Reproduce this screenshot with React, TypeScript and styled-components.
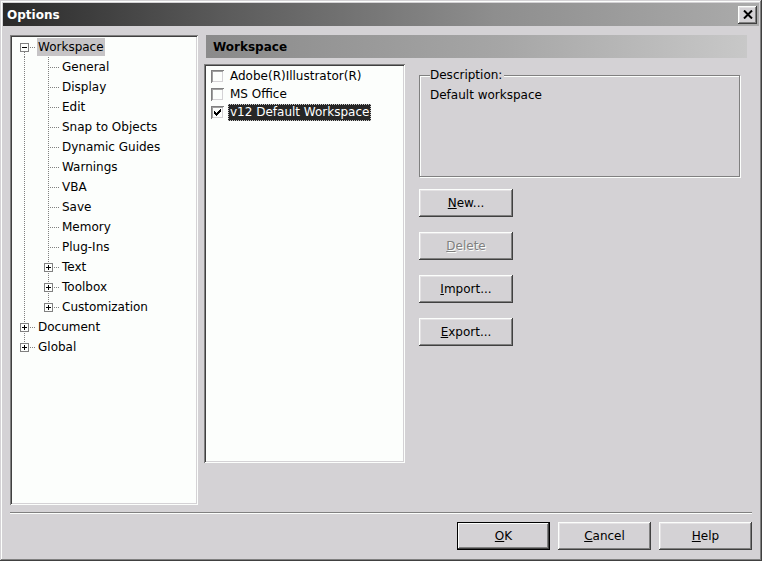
import React from 'react';
import styled, { createGlobalStyle } from 'styled-components';

const FACE = '#d4d2d5';
const WHITE = '#fcfefc';

const GlobalStyle = createGlobalStyle`
  html, body {
    margin: 0;
    padding: 0;
    background: ${FACE};
  }
  body {
    font-family: 'DejaVu Sans', 'Liberation Sans', sans-serif;
    font-size: 12px;
    color: #000;
  }
  * { box-sizing: border-box; }
`;

const Window = styled.div`
  width: 762px;
  height: 561px;
  padding: 3px;
  display: flex;
  flex-direction: column;
  background: ${FACE};
  box-shadow: inset -1px -1px #404040, inset 1px 1px ${FACE},
    inset -2px -2px #808080, inset 2px 2px ${WHITE};
`;

const TitleBar = styled.div`
  flex: none;
  height: 23px;
  display: flex;
  align-items: center;
  padding: 0 2px 0 4px;
  background: linear-gradient(to right, #2a2a2a 0%, #5c5c5c 30%, #8e8e8e 65%, #ababab 100%);
  color: #fff;
  font-weight: bold;
  font-size: 12px;
`;

const CloseButton = styled.button`
  margin-left: auto;
  width: 19px;
  height: 18px;
  padding: 0;
  border: none;
  display: flex;
  align-items: center;
  justify-content: center;
  background: ${FACE};
  box-shadow: inset -1px -1px #404040, inset 1px 1px ${WHITE},
    inset -2px -2px #808080, inset 2px 2px #e4e2e4;
`;

const Body = styled.div`
  flex: 1;
  display: flex;
  flex-direction: column;
  padding: 9px 7px 8px 7px;
`;

const Main = styled.div`
  flex: none;
  display: flex;
  gap: 6px;
  height: 470px;
`;

const Sunken = styled.div`
  background: ${WHITE};
  padding: 2px;
  box-shadow: inset 1px 1px #808080, inset -1px -1px ${WHITE},
    inset 2px 2px #404040, inset -2px -2px ${FACE};
`;

const TreePanel = styled(Sunken)`
  width: 188px;
  height: 470px;
`;

const TreeRow = styled.div`
  display: flex;
  height: 20px;
  align-items: flex-start;
`;

type VLine = 'full' | 'top' | 'bottom' | 'none';

const dotV = 'repeating-linear-gradient(to bottom, #808080 0 1px, transparent 1px 2px)';
const dotH = 'repeating-linear-gradient(to right, #808080 0 1px, transparent 1px 2px)';

const vLayer = (v: VLine) => {
  if (v === 'full') return { img: dotV, size: '1px 20px', pos: '12px 0' };
  if (v === 'top') return { img: dotV, size: '1px 10px', pos: '12px 0' };
  if (v === 'bottom') return { img: dotV, size: '1px 10px', pos: '12px 11px' };
  return null;
};

const GuideCell = styled.span<{ $v: VLine; $h: boolean }>`
  flex: none;
  width: 24px;
  height: 20px;
  display: flex;
  padding: 6px 0 0 8px;
  background-repeat: no-repeat;
  ${({ $v, $h }) => {
    const layers: { img: string; size: string; pos: string }[] = [];
    const v = vLayer($v);
    if (v) layers.push(v);
    if ($h) layers.push({ img: dotH, size: '12px 1px', pos: '12px 10px' });
    if (!layers.length) return '';
    return `
      background-image: ${layers.map((l) => l.img).join(', ')};
      background-size: ${layers.map((l) => l.size).join(', ')};
      background-position: ${layers.map((l) => l.pos).join(', ')};
    `;
  }}
`;

const TreeLabel = styled.span<{ $selected?: boolean }>`
  height: 18px;
  line-height: 18px;
  margin: 1px 0 0 1px;
  padding: 0 1px;
  white-space: nowrap;
  background: ${({ $selected }) => ($selected ? '#c6c4c6' : 'transparent')};
`;

const ToggleBox: React.FC<{ open: boolean }> = ({ open }) => (
  <svg width="9" height="9" viewBox="0 0 9 9" shapeRendering="crispEdges">
    <rect x="0.5" y="0.5" width="8" height="8" fill={WHITE} stroke="#808080" />
    <path d="M2 4.5h5" stroke="#000" />
    {!open && <path d="M4.5 2v5" stroke="#000" />}
  </svg>
);

type Cell = { v: VLine; h: boolean; toggle?: 'open' | 'closed' };
type TreeItem = { label: string; cells: Cell[]; selected?: boolean };

const child = (label: string): TreeItem => ({
  label,
  cells: [
    { v: 'full', h: false },
    { v: 'full', h: true },
  ],
});

const treeItems: TreeItem[] = [
  { label: 'Workspace', selected: true, cells: [{ v: 'bottom', h: true, toggle: 'open' }] },
  child('General'),
  child('Display'),
  child('Edit'),
  child('Snap to Objects'),
  child('Dynamic Guides'),
  child('Warnings'),
  child('VBA'),
  child('Save'),
  child('Memory'),
  child('Plug-Ins'),
  { label: 'Text', cells: [{ v: 'full', h: false }, { v: 'full', h: true, toggle: 'closed' }] },
  { label: 'Toolbox', cells: [{ v: 'full', h: false }, { v: 'full', h: true, toggle: 'closed' }] },
  { label: 'Customization', cells: [{ v: 'full', h: false }, { v: 'top', h: true, toggle: 'closed' }] },
  { label: 'Document', cells: [{ v: 'full', h: true, toggle: 'closed' }] },
  { label: 'Global', cells: [{ v: 'top', h: true, toggle: 'closed' }] },
];

const RightColumn = styled.div`
  width: 548px;
  display: flex;
  flex-direction: column;
  gap: 6px;
`;

const PageHeader = styled.div`
  margin-left: 2px;
  width: 541px;
  height: 23px;
  display: flex;
  align-items: center;
  padding-left: 7px;
  font-weight: bold;
  background: linear-gradient(to right, #8a8a8a, #a6a6a6 55%, #c8c8c8);
`;

const PageRow = styled.div`
  display: flex;
  gap: 14px;
`;

const ListBox = styled(Sunken)`
  width: 201px;
  height: 399px;
  padding: 3px 2px 2px 7px;
`;

const ListRow = styled.div`
  display: flex;
  align-items: center;
  height: 18px;
  gap: 4px;
`;

const CheckBox = styled.span`
  flex: none;
  width: 13px;
  height: 13px;
  display: flex;
  align-items: center;
  justify-content: center;
  background: ${WHITE};
  box-shadow: inset 1px 1px #808080, inset -1px -1px ${WHITE},
    inset 2px 2px #a0a0a0, inset -2px -2px ${FACE};
`;

const ItemText = styled.span<{ $selected?: boolean }>`
  height: 17px;
  line-height: 15px;
  padding: 0 1px;
  white-space: nowrap;
  border: 1px dotted ${({ $selected }) => ($selected ? '#c8c8c8' : 'transparent')};
  background: ${({ $selected }) => ($selected ? '#262626' : 'transparent')};
  color: ${({ $selected }) => ($selected ? '#fff' : '#000')};
`;

const SidePanel = styled.div`
  width: 333px;
  display: flex;
  flex-direction: column;
  align-items: flex-start;
  padding-top: 11px;
`;

const Group = styled.div`
  width: 321px;
  height: 102px;
  border: 1px solid #808080;
  box-shadow: 1px 1px 0 ${WHITE}, inset 1px 1px 0 ${WHITE};
  padding: 0 10px;
  display: flex;
  flex-direction: column;
  align-items: flex-start;
  margin-bottom: 12px;
`;

const GroupLegend = styled.span`
  margin-top: -8px;
  padding: 0 2px 0 0;
  line-height: 14px;
  background: ${FACE};
`;

const GroupText = styled.div`
  margin-top: 6px;
`;

const ButtonStack = styled.div`
  display: flex;
  flex-direction: column;
  gap: 15px;
`;

const Button = styled.button<{ $width?: number; $default?: boolean }>`
  flex: none;
  width: ${({ $width }) => $width ?? 94}px;
  height: 28px;
  padding: 0;
  border: none;
  font-family: inherit;
  font-size: 12px;
  color: #000;
  background: ${FACE};
  box-shadow: ${({ $default }) =>
    $default
      ? `inset 0 0 0 1px #000, inset -2px -2px #404040, inset 2px 2px ${WHITE}, inset -3px -3px #808080`
      : `inset -1px -1px #404040, inset 1px 1px ${WHITE}, inset -2px -2px #808080, inset 2px 2px #e4e2e4`};

  &:disabled {
    color: #808080;
    text-shadow: 1px 1px 0 ${WHITE};
  }
`;

const Separator = styled.div`
  flex: none;
  margin-top: 7px;
  height: 2px;
  border-top: 1px solid #808080;
  border-bottom: 1px solid ${WHITE};
`;

const Footer = styled.div`
  flex: none;
  margin-top: 8px;
  display: flex;
  justify-content: flex-end;
  gap: 8px;
`;

const checkRows: [number, number][][] = [
  [[6, 1]],
  [[5, 2]],
  [[0, 1], [4, 3]],
  [[0, 2], [3, 3]],
  [[0, 5]],
  [[1, 3]],
  [[2, 1]],
];

const CheckMark = () => (
  <svg width="7" height="7" viewBox="0 0 7 7" shapeRendering="crispEdges">
    {checkRows.flatMap((segs, y) =>
      segs.map(([x, w]) => <rect key={`${y}-${x}`} x={x} y={y} width={w} height={1} fill="#000" />),
    )}
  </svg>
);

const workspaces = [
  { name: 'Adobe(R)Illustrator(R)', checked: false },
  { name: 'MS Office', checked: false },
  { name: 'v12 Default Workspace', checked: true, selected: true },
];

export default function App() {
  return (
    <>
      <GlobalStyle />
      <Window>
        <TitleBar>
          <span>Options</span>
          <CloseButton aria-label="Close">
            <svg width="10" height="9" viewBox="0 0 10 9">
              <path d="M1 0.5 L9 8.5 M9 0.5 L1 8.5" stroke="#000" strokeWidth="2" />
            </svg>
          </CloseButton>
        </TitleBar>
        <Body>
          <Main>
            <TreePanel>
              {treeItems.map((item) => (
                <TreeRow key={item.label}>
                  {item.cells.map((c, i) => (
                    <GuideCell key={i} $v={c.v} $h={c.h}>
                      {c.toggle && <ToggleBox open={c.toggle === 'open'} />}
                    </GuideCell>
                  ))}
                  <TreeLabel $selected={item.selected}>{item.label}</TreeLabel>
                </TreeRow>
              ))}
            </TreePanel>
            <RightColumn>
              <PageHeader>Workspace</PageHeader>
              <PageRow>
                <ListBox>
                  {workspaces.map((w) => (
                    <ListRow key={w.name}>
                      <CheckBox>{w.checked && <CheckMark />}</CheckBox>
                      <ItemText $selected={w.selected}>{w.name}</ItemText>
                    </ListRow>
                  ))}
                </ListBox>
                <SidePanel>
                  <Group>
                    <GroupLegend>Description:</GroupLegend>
                    <GroupText>Default workspace</GroupText>
                  </Group>
                  <ButtonStack>
                    <Button>
                      <u>N</u>ew...
                    </Button>
                    <Button disabled>
                      <u>D</u>elete
                    </Button>
                    <Button>
                      <u>I</u>mport...
                    </Button>
                    <Button>
                      <u>E</u>xport...
                    </Button>
                  </ButtonStack>
                </SidePanel>
              </PageRow>
            </RightColumn>
          </Main>
          <Separator />
          <Footer>
            <Button $width={93} $default>
              <u>O</u>K
            </Button>
            <Button $width={93}>
              <u>C</u>ancel
            </Button>
            <Button $width={93}>
              <u>H</u>elp
            </Button>
          </Footer>
        </Body>
      </Window>
    </>
  );
}
